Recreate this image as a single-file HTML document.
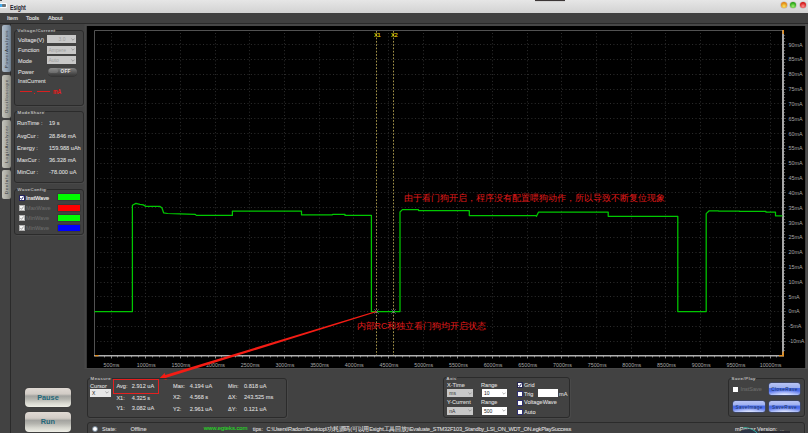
<!DOCTYPE html>
<html><head><meta charset="utf-8"><style>
*{margin:0;padding:0;box-sizing:border-box}
html,body{width:808px;height:433px;overflow:hidden;background:#424242;font-family:"Liberation Sans",sans-serif;color:#d8d8d8}
.a{position:absolute;white-space:nowrap}
.gb{position:absolute;border:1px solid #2b2b2b;border-radius:3px;box-shadow:0.8px 0.8px 0 #4c4c4c}
.gl{position:absolute;font-size:4.3px;letter-spacing:0.55px;color:#e0e0e0;background:#424242;padding:0 0.5px;line-height:5px}
.t{position:absolute;white-space:nowrap;font-size:5.6px;line-height:8px;color:#d8d8d8;-webkit-text-stroke:0.12px currentColor}
.dd{position:absolute;background:#c8c8c8;font-size:5px;color:#a0a0a0;line-height:8px}
.ck{position:absolute;width:6px;height:6px;background:#fff;border:0.8px solid #282860}
.btnb{position:absolute;border-radius:2.5px;background:radial-gradient(ellipse 60% 45% at 50% 100%,rgba(230,236,255,0.95),rgba(200,212,255,0) 100%),linear-gradient(#b8c4f4 0%,#9eb0f0 38%,#4a6ce4 44%,#4c6cea 62%,#7088f0 85%,#98b0f8 100%);font-size:4.6px;letter-spacing:0.45px;color:#1a3468;text-align:center;line-height:13px;box-shadow:0 0 0 0.5px #3a4a80}
.vt{font-size:4.4px;letter-spacing:0.75px;color:#30343a;transform:translate(-50%,-50%) rotate(-90deg);line-height:6px}
.chev{position:absolute;width:2.2px;height:2.2px;border-right:0.55px solid #8c8c8c;border-bottom:0.55px solid #8c8c8c;transform:rotate(45deg)}
.chk{font-size:5px;line-height:5px;font-weight:bold}
.btn{position:absolute;width:46.5px;border-radius:4px;background:linear-gradient(#e0dad4,#d2ccc6 30%,#c6c2bc 34%,#a4a4a0 42%,#b4b4ae 58%,#d8d8d0 80%,#eeeee6);font-size:7.3px;font-weight:bold;color:#24687a;text-align:center;line-height:20px;box-shadow:0 0 1px #2a2a2a}
</style></head><body>
<!-- title bar -->
<div class="a" style="left:0;top:0;width:808px;height:12.6px;background:linear-gradient(#e6e6e6,#d2d2d2)"></div>
<div class="a" style="left:0.3px;top:2.8px;width:6.5px;height:5.6px;border-radius:1.6px;background:#fafcff;box-shadow:0 0 0.8px #fff"></div>
<div class="a" style="left:0px;top:3.8px;width:6px;height:3.6px;border-radius:0 2px 2px 0;background:linear-gradient(90deg,#38a8f0,#5ab8f0 50%,#90c8e8)"></div>
<div class="a" style="left:2.2px;top:4.2px;width:3.4px;height:2.6px;border-radius:1px;background:#707478"></div>
<div class="a" style="left:0;top:0;width:2px;height:1px;background:#505050"></div>
<div class="a" style="left:10px;top:2.7px;font-size:7.2px;font-weight:bold;color:#1a1a2a;line-height:9px;transform:scaleX(0.72);transform-origin:0 0">Esight</div>
<div class="a" style="left:780.5px;top:2.3px;width:6px;height:6px;border-radius:50%;background:radial-gradient(circle at 50% 70%,#f8e860,#e08010 70%);box-shadow:0 0 0 0.6px rgba(120,90,90,0.35)"></div>
<div class="a" style="left:790px;top:2.3px;width:6px;height:6px;border-radius:50%;background:radial-gradient(circle at 50% 70%,#a0f070,#20a010 70%);box-shadow:0 0 0 0.6px rgba(120,90,90,0.35)"></div>
<div class="a" style="left:800px;top:2.3px;width:6px;height:6px;border-radius:50%;background:radial-gradient(circle at 50% 70%,#ff9090,#d01010 70%);box-shadow:0 0 0 0.6px rgba(120,90,90,0.35)"></div>
<div class="a" style="left:535.2px;top:0;width:29.7px;height:1px;background:#3c3636;box-shadow:0 0.5px 1px rgba(0,0,0,0.15)"></div>
<!-- menu -->
<div class="a" style="left:0;top:12.6px;width:808px;height:10.4px;background:#404040"></div>
<div class="a" style="left:0;top:23px;width:808px;height:1px;background:#2a2a2a"></div>
<div class="t" style="left:7px;top:14px;color:#e2e2e2">Item</div>
<div class="t" style="left:26px;top:14px;color:#e2e2e2">Tools</div>
<div class="t" style="left:48px;top:14px;color:#e2e2e2">About</div>

<!-- left tab strip -->
<div class="a" style="left:10px;top:24px;width:1px;height:409px;background:#2a2a2a"></div>
<div class="a" style="left:2px;top:25px;width:9px;height:47px;border-radius:2px;background:linear-gradient(90deg,#b0bcc8,#9aaaba 45%,#7a8a9a 85%,#687888)"></div>
<div class="a" style="left:2px;top:74.5px;width:9px;height:43px;border-radius:2px;background:linear-gradient(90deg,#c4c4bc,#b0b0a8 45%,#94948c 85%,#80807a)"></div>
<div class="a" style="left:2px;top:120px;width:9px;height:47.5px;border-radius:2px;background:linear-gradient(90deg,#c4c4bc,#b0b0a8 45%,#94948c 85%,#80807a)"></div>
<div class="a" style="left:2px;top:169.5px;width:9px;height:29px;border-radius:2px;background:linear-gradient(90deg,#c4c4bc,#b0b0a8 45%,#94948c 85%,#80807a)"></div>
<div class="a vt" style="left:6.5px;top:48.5px;">PowerAnalysis</div>
<div class="a vt" style="left:6.5px;top:96px;">Oscilloscope</div>
<div class="a vt" style="left:6.5px;top:144px;">LogicAnalyzer</div>
<div class="a vt" style="left:6.5px;top:184px;">DevInfo</div>

<!-- Voltage/Current -->
<div class="gb" style="left:14.3px;top:30.1px;width:69.5px;height:75.8px"></div>
<div class="gl" style="left:17px;top:28px">Voltage/Current</div>
<div class="t" style="left:18px;top:36px">Voltage(V)</div>
<div class="t" style="left:18px;top:46px">Function</div>
<div class="t" style="left:18px;top:56.5px">Mode</div>
<div class="t" style="left:18px;top:68px">Power</div>
<div class="t" style="left:18px;top:77px">InstCurrent</div>
<div class="dd" style="left:47px;top:35.2px;width:29px;height:8.2px;padding-left:11.5px">3.0</div>
<div class="dd" style="left:47px;top:45.9px;width:29px;height:8px;padding-left:1.5px">Ampere</div>
<div class="dd" style="left:47px;top:56px;width:29px;height:8px;padding-left:1.5px">Auto</div>
<svg class="a" style="left:70.6px;top:37.7px" width="4" height="3" viewBox="0 0 4 3"><path d="M0.4 0.6L2 2.2L3.6 0.6" stroke="#7a7a7a" stroke-width="0.6" fill="none"/></svg>
<svg class="a" style="left:70.6px;top:48.2px" width="4" height="3" viewBox="0 0 4 3"><path d="M0.4 0.6L2 2.2L3.6 0.6" stroke="#7a7a7a" stroke-width="0.6" fill="none"/></svg>
<svg class="a" style="left:70.6px;top:58.5px" width="4" height="3" viewBox="0 0 4 3"><path d="M0.4 0.6L2 2.2L3.6 0.6" stroke="#7a7a7a" stroke-width="0.6" fill="none"/></svg>
<div class="a" style="left:47.7px;top:68.2px;width:29.1px;height:7.8px;border-radius:4px;background:linear-gradient(#808080,#5e5e5e 45%,#444 80%,#3a3a3a);box-shadow:0 0.5px 0.5px #2a2a2a"></div>
<div class="a" style="left:48.5px;top:68.2px;width:9px;height:5px;border-radius:4px 4px 2px 2px;background:linear-gradient(#8a8a8a,#6a6a6a)"></div>
<div class="a" style="left:60.6px;top:68.2px;font-size:4.7px;font-weight:bold;color:#e4e4e4;line-height:8px;letter-spacing:0.25px">OFF</div>
<div class="a" style="left:20px;top:91px;width:12px;height:0.8px;background:#d82020"></div>
<div class="a" style="left:33.6px;top:93px;width:1px;height:1px;background:#d82020"></div>
<div class="a" style="left:37px;top:91px;width:12.5px;height:0.8px;background:#d82020"></div>
<div class="a" style="left:53.2px;top:87.6px;font-size:7.6px;font-weight:bold;color:#f01818;line-height:8px;transform:scaleX(0.66);transform-origin:0 0">mA</div>

<!-- ModeShare -->
<div class="gb" style="left:14.3px;top:111.2px;width:69.5px;height:72.2px"></div>
<div class="gl" style="left:17px;top:109.5px">ModeShare</div>
<div class="t" style="left:17px;top:119.3px">RunTime :</div>
<div class="t" style="left:17px;top:131.8px">AvgCur :</div>
<div class="t" style="left:17px;top:144.2px">Energy :</div>
<div class="t" style="left:17px;top:156.3px">MaxCur :</div>
<div class="t" style="left:17px;top:168.1px">MinCur :</div>
<div class="t" style="left:49px;top:119.3px">19 s</div>
<div class="t" style="left:49px;top:131.8px">28.846 mA</div>
<div class="t" style="left:49px;top:144.2px">159.988 uAh</div>
<div class="t" style="left:49px;top:156.3px">36.328 mA</div>
<div class="t" style="left:49px;top:168.1px">-78.000 uA</div>

<!-- WaveConfig -->
<div class="gb" style="left:14.3px;top:188.9px;width:69.5px;height:46.1px"></div>
<div class="gl" style="left:17px;top:187px">WaveConfig</div>
<div class="ck" style="left:18.6px;top:195.1px;border-color:#262660"></div>
<div class="ck" style="left:18.6px;top:205.1px;border-color:#b0b0b0;background:#f4f4f4"></div>
<div class="ck" style="left:18.6px;top:215.1px;border-color:#b0b0b0;background:#f4f4f4"></div>
<div class="ck" style="left:18.6px;top:225.2px;border-color:#b0b0b0;background:#f4f4f4"></div>
<svg class="a" style="left:18.6px;top:195.1px" width="6" height="6" viewBox="0 0 6 6"><path d="M1.4 3.1L2.6 4.4L4.6 1.5" stroke="#2a2a70" stroke-width="1" fill="none"/></svg>
<svg class="a" style="left:18.6px;top:205.1px" width="6" height="6" viewBox="0 0 6 6"><path d="M1.4 3.1L2.6 4.4L4.6 1.5" stroke="#9a9a9a" stroke-width="0.9" fill="none"/></svg>
<svg class="a" style="left:18.6px;top:215.1px" width="6" height="6" viewBox="0 0 6 6"><path d="M1.4 3.1L2.6 4.4L4.6 1.5" stroke="#9a9a9a" stroke-width="0.9" fill="none"/></svg>
<svg class="a" style="left:18.6px;top:225.2px" width="6" height="6" viewBox="0 0 6 6"><path d="M1.4 3.1L2.6 4.4L4.6 1.5" stroke="#9a9a9a" stroke-width="0.9" fill="none"/></svg>
<div class="t" style="left:26px;top:193.9px;color:#f4f4f4">InstWave</div>
<div class="t" style="left:26px;top:203.9px;color:#686868">MaxWave</div>
<div class="t" style="left:26px;top:213.9px;color:#686868">MinWave</div>
<div class="t" style="left:26px;top:224px;color:#686868">MinWave</div>
<div class="a" style="left:57.6px;top:194.4px;width:22.8px;height:6px;background:#00ff00;box-shadow:0 0 0 0.5px #303030"></div>
<div class="a" style="left:57.6px;top:204.6px;width:22.8px;height:6px;background:#ff0000;box-shadow:0 0 0 0.5px #303030"></div>
<div class="a" style="left:57.6px;top:214.8px;width:22.8px;height:6px;background:#00ff00;box-shadow:0 0 0 0.5px #303030"></div>
<div class="a" style="left:57.6px;top:224.9px;width:22.8px;height:6px;background:#0000ff;box-shadow:0 0 0 0.5px #303030"></div>

<!-- buttons -->
<div class="btn" style="left:24.7px;top:387.5px;height:19.8px">Pause</div>
<div class="btn" style="left:24.7px;top:412.2px;height:19.6px">Run</div>
<svg width="808" height="433" viewBox="0 0 808 433" style="position:absolute;left:0;top:0">
<rect x="84.5" y="24" width="723.5" height="345" fill="#484848"/>
<rect x="805" y="24" width="2" height="345" fill="#505050"/>
<rect x="86.8" y="26" width="718.4" height="342" fill="#000"/>
<path d="M97.0 44.5H782M97.0 59.5H782M97.0 74.5H782M97.0 89.5H782M97.0 103.5H782M97.0 118.5H782M97.0 133.5H782M97.0 148.5H782M97.0 163.5H782M97.0 178.5H782M97.0 192.5H782M97.0 207.5H782M97.0 222.5H782M97.0 237.5H782M97.0 252.5H782M97.0 267.5H782M97.0 282.5H782M97.0 296.5H782M97.0 311.5H782M97.0 326.5H782M97.0 341.5H782" stroke="#2e2e2e" stroke-width="1" stroke-dasharray="1 2.42" fill="none"/>
<path d="M111.5 33.0V354.5M145.5 33.0V354.5M180.5 33.0V354.5M215.5 33.0V354.5M249.5 33.0V354.5M284.5 33.0V354.5M319.5 33.0V354.5M353.5 33.0V354.5M388.5 33.0V354.5M423.5 33.0V354.5M457.5 33.0V354.5M492.5 33.0V354.5M527.5 33.0V354.5M561.5 33.0V354.5M596.5 33.0V354.5M631.5 33.0V354.5M665.5 33.0V354.5M700.5 33.0V354.5M735.5 33.0V354.5M770.5 33.0V354.5" stroke="#2e2e2e" stroke-width="1" stroke-dasharray="1 2.42" fill="none"/>
<path d="M94.5 30.5H783M94.5 30.5V355.5" stroke="#525252" stroke-width="1" fill="none"/>
<rect x="782" y="30" width="2" height="326" fill="#a8a8a8"/>
<path d="M784 35.5h1.1M784 38.5h1.1M784 41.5h1.1M784 44.5h1.8M784 47.5h1.1M784 50.5h1.1M784 53.5h1.1M784 56.5h1.1M784 59.5h1.8M784 62.5h1.1M784 65.5h1.1M784 68.5h1.1M784 71.5h1.1M784 74.5h1.8M784 77.5h1.1M784 80.5h1.1M784 83.5h1.1M784 86.5h1.1M784 89.5h1.8M784 92.5h1.1M784 94.5h1.1M784 97.5h1.1M784 100.5h1.1M784 103.5h1.8M784 106.5h1.1M784 109.5h1.1M784 112.5h1.1M784 115.5h1.1M784 118.5h1.8M784 121.5h1.1M784 124.5h1.1M784 127.5h1.1M784 130.5h1.1M784 133.5h1.8M784 136.5h1.1M784 139.5h1.1M784 142.5h1.1M784 145.5h1.1M784 148.5h1.8M784 151.5h1.1M784 154.5h1.1M784 157.5h1.1M784 160.5h1.1M784 163.5h1.8M784 166.5h1.1M784 169.5h1.1M784 172.5h1.1M784 175.5h1.1M784 178.5h1.8M784 181.5h1.1M784 184.5h1.1M784 187.5h1.1M784 190.5h1.1M784 192.5h1.8M784 195.5h1.1M784 198.5h1.1M784 201.5h1.1M784 204.5h1.1M784 207.5h1.8M784 210.5h1.1M784 213.5h1.1M784 216.5h1.1M784 219.5h1.1M784 222.5h1.8M784 225.5h1.1M784 228.5h1.1M784 231.5h1.1M784 234.5h1.1M784 237.5h1.8M784 240.5h1.1M784 243.5h1.1M784 246.5h1.1M784 249.5h1.1M784 252.5h1.8M784 255.5h1.1M784 258.5h1.1M784 261.5h1.1M784 264.5h1.1M784 267.5h1.8M784 270.5h1.1M784 273.5h1.1M784 276.5h1.1M784 279.5h1.1M784 282.5h1.8M784 285.5h1.1M784 288.5h1.1M784 291.5h1.1M784 293.5h1.1M784 296.5h1.8M784 299.5h1.1M784 302.5h1.1M784 305.5h1.1M784 308.5h1.1M784 311.5h1.8M784 314.5h1.1M784 317.5h1.1M784 320.5h1.1M784 323.5h1.1M784 326.5h1.8M784 329.5h1.1M784 332.5h1.1M784 335.5h1.1M784 338.5h1.1M784 341.5h1.8M784 344.5h1.1M784 347.5h1.1M784 350.5h1.1" stroke="#6c6c6c" stroke-width="0.8" fill="none"/>
<rect x="94" y="355" width="690" height="1.5" fill="#b0b0b0"/>
<path d="M104.5 356v1.4M111.5 356v2.4M117.5 356v1.4M124.5 356v1.4M131.5 356v1.4M138.5 356v1.4M145.5 356v2.4M152.5 356v1.4M159.5 356v1.4M166.5 356v1.4M173.5 356v1.4M180.5 356v2.4M187.5 356v1.4M194.5 356v1.4M201.5 356v1.4M208.5 356v1.4M215.5 356v2.4M221.5 356v1.4M228.5 356v1.4M235.5 356v1.4M242.5 356v1.4M249.5 356v2.4M256.5 356v1.4M263.5 356v1.4M270.5 356v1.4M277.5 356v1.4M284.5 356v2.4M291.5 356v1.4M298.5 356v1.4M305.5 356v1.4M312.5 356v1.4M319.5 356v2.4M326.5 356v1.4M332.5 356v1.4M339.5 356v1.4M346.5 356v1.4M353.5 356v2.4M360.5 356v1.4M367.5 356v1.4M374.5 356v1.4M381.5 356v1.4M388.5 356v2.4M395.5 356v1.4M402.5 356v1.4M409.5 356v1.4M416.5 356v1.4M423.5 356v2.4M430.5 356v1.4M437.5 356v1.4M443.5 356v1.4M450.5 356v1.4M457.5 356v2.4M464.5 356v1.4M471.5 356v1.4M478.5 356v1.4M485.5 356v1.4M492.5 356v2.4M499.5 356v1.4M506.5 356v1.4M513.5 356v1.4M520.5 356v1.4M527.5 356v2.4M534.5 356v1.4M541.5 356v1.4M548.5 356v1.4M554.5 356v1.4M561.5 356v2.4M568.5 356v1.4M575.5 356v1.4M582.5 356v1.4M589.5 356v1.4M596.5 356v2.4M603.5 356v1.4M610.5 356v1.4M617.5 356v1.4M624.5 356v1.4M631.5 356v2.4M638.5 356v1.4M645.5 356v1.4M652.5 356v1.4M659.5 356v1.4M665.5 356v2.4M672.5 356v1.4M679.5 356v1.4M686.5 356v1.4M693.5 356v1.4M700.5 356v2.4M707.5 356v1.4M714.5 356v1.4M721.5 356v1.4M728.5 356v1.4M735.5 356v2.4M742.5 356v1.4M749.5 356v1.4M756.5 356v1.4M763.5 356v1.4M770.5 356v2.4M776.5 356v1.4" stroke="#9a9a9a" stroke-width="0.9" fill="none"/>
<rect x="782.5" y="30" width="1.5" height="4" fill="#e08a1a"/>
<rect x="782.5" y="351.5" width="1.5" height="4.5" fill="#e08a1a"/>
<rect x="779" y="355" width="5" height="1.3" fill="#e08a1a"/>
<rect x="95" y="355" width="3.5" height="1.3" fill="#e08a1a"/>
<g font-family="Liberation Sans, sans-serif" font-size="5.4" fill="#a8a8a8"><text x="788.5" y="46.5">90mA</text><text x="788.5" y="61.3">85mA</text><text x="788.5" y="76.2">80mA</text><text x="788.5" y="91.0">75mA</text><text x="788.5" y="105.8">70mA</text><text x="788.5" y="120.7">65mA</text><text x="788.5" y="135.5">60mA</text><text x="788.5" y="150.3">55mA</text><text x="788.5" y="165.1">50mA</text><text x="788.5" y="180.0">45mA</text><text x="788.5" y="194.8">40mA</text><text x="788.5" y="209.6">35mA</text><text x="788.5" y="224.5">30mA</text><text x="788.5" y="239.3">25mA</text><text x="788.5" y="254.1">20mA</text><text x="788.5" y="268.9">15mA</text><text x="788.5" y="283.8">10mA</text><text x="788.5" y="298.6">5mA</text><text x="788.5" y="313.4">0mA</text><text x="788.5" y="328.3">-5mA</text><text x="788.5" y="343.1">-10mA</text></g>
<g font-family="Liberation Sans, sans-serif" font-size="5.3" fill="#a8a8a8" text-anchor="middle"><text x="111.5" y="367.4">500ms</text><text x="146.2" y="367.4">1000ms</text><text x="180.9" y="367.4">1500ms</text><text x="215.6" y="367.4">2000ms</text><text x="250.3" y="367.4">2500ms</text><text x="284.9" y="367.4">3000ms</text><text x="319.6" y="367.4">3500ms</text><text x="354.3" y="367.4">4000ms</text><text x="389.0" y="367.4">4500ms</text><text x="423.7" y="367.4">5000ms</text><text x="458.4" y="367.4">5500ms</text><text x="493.1" y="367.4">6000ms</text><text x="527.8" y="367.4">6500ms</text><text x="562.5" y="367.4">7000ms</text><text x="597.2" y="367.4">7500ms</text><text x="631.8" y="367.4">8000ms</text><text x="666.5" y="367.4">8500ms</text><text x="701.2" y="367.4">9000ms</text><text x="735.9" y="367.4">9500ms</text><text x="770.6" y="367.4">10000ms</text></g>
<path d="M94.5 311.5 L132.4 311.5 L132.4 205.2 L135.9 203.4 L139.9 204.4 L143.3 204.9 L145.8 206.4 L160.1 206.4 L162 208 L163.6 212.8 L167.6 213.5 L180 213.8 L195.3 214.4 L196.3 215.4 L232.4 215.4 L232.4 211.2 L301.5 211.2 L301.5 214.8 L332 214.8 L333 214.4 L345 214.4 L345 215.4 L371.4 215.4 L371.4 311.5 L400 311.5 L400 212 L402.4 209.6 L418.5 209.6 L418.5 210.5 L469.3 210.5 L469.3 215.6 L535.7 215.6 L536.5 216.3 L538.6 212 L608.2 212 L608.2 216.3 L677.8 216.3 L677.8 311.5 L706.2 311.5 L706.2 213.6 L709.2 210.8 L718.5 210.8 L718.5 211.1 L739.5 211.1 L739.5 211.4 L765.9 211.4 L765.9 212.1 L775.5 212.1 L775.5 215.8 L782.5 215.8" stroke="#00c800" stroke-width="1.25" fill="none" stroke-linejoin="round"/>
<path d="M376.5 31V355M393.5 31V355" stroke="#a09048" stroke-width="1" stroke-dasharray="1.7 1.6" fill="none"/>
<g font-family="Liberation Sans, sans-serif" font-size="5.6" fill="#e4d400" stroke="#e4d400" stroke-width="0.15"><text x="373.9" y="36.6">X1</text><text x="390.9" y="36.6">X2</text></g>
<path d="M374.3 309.3l4.4 4.4M378.7 309.3l-4.4 4.4M391.3 309.3l4.4 4.4M395.7 309.3l-4.4 4.4" stroke="#7080a0" stroke-width="0.7"/>
<text x="404" y="201.3" font-family="Liberation Sans, sans-serif" font-size="8.8" fill="#e01a1a">由于看门狗开启，程序没有配置喂狗动作，所以导致不断复位现象</text>
<text x="356.6" y="329.4" font-family="Liberation Sans, sans-serif" font-size="8.8" fill="#e01a1a">内部RC和独立看门狗均开启状态</text>
<path d="M376.32 310.93 L165.27 374.95 L164.68 373.04 L159.50 378.30 L166.74 379.73 L166.15 377.82 L376.68 312.07Z" fill="#f41c14"/>
</svg>

<!-- Measure -->
<div class="gb" style="left:86.8px;top:377.9px;width:200.0px;height:39.9px"></div>
<div class="gl" style="left:90px;top:376px">Measure</div>
<div class="t" style="left:90px;top:381.5px">Cursor</div>
<div class="dd" style="left:90px;top:389px;width:20.6px;height:8.2px;background:#e8e8e8;color:#222;padding-left:2px">X</div>
<svg class="a" style="left:104.6px;top:391.2px" width="4" height="3" viewBox="0 0 4 3"><path d="M0.4 0.6L2 2.2L3.6 0.6" stroke="#7a7a7a" stroke-width="0.6" fill="none"/></svg>
<div class="a" style="left:113px;top:378.8px;width:46px;height:15px;border:1.6px solid #e42020"></div>
<div class="t" style="left:116.4px;top:381.7px">Avg:</div>
<div class="t" style="left:131.8px;top:381.7px">2.912 uA</div>
<div class="t" style="left:116.4px;top:393.7px">X1:</div>
<div class="t" style="left:131.8px;top:393.7px">4.325 s</div>
<div class="t" style="left:116.4px;top:403.7px">Y1:</div>
<div class="t" style="left:131.8px;top:403.7px">3.082 uA</div>
<div class="t" style="left:173px;top:382px">Max:</div>
<div class="t" style="left:189.8px;top:382px">4.194 uA</div>
<div class="t" style="left:173px;top:393.4px">X2:</div>
<div class="t" style="left:189.8px;top:393.4px">4.568 s</div>
<div class="t" style="left:173px;top:404.5px">Y2:</div>
<div class="t" style="left:189.8px;top:404.5px">2.961 uA</div>
<div class="t" style="left:228px;top:382px">Min:</div>
<div class="t" style="left:244px;top:382px">0.818 uA</div>
<div class="t" style="left:228px;top:393.4px">&Delta;X:</div>
<div class="t" style="left:244px;top:393.4px">243.525 ms</div>
<div class="t" style="left:228px;top:404.5px">&Delta;Y:</div>
<div class="t" style="left:244px;top:404.5px">0.121 uA</div>

<!-- Axis -->
<div class="gb" style="left:443.0px;top:377.4px;width:127.1px;height:40.3px"></div>
<div class="gl" style="left:446px;top:375.5px">Axis</div>
<div class="t" style="left:447px;top:381px">X-Time</div>
<div class="t" style="left:481px;top:381px">Range</div>
<div class="t" style="left:447px;top:398px">Y-Current</div>
<div class="t" style="left:481px;top:398px">Range</div>
<div class="dd" style="left:447.3px;top:389.4px;width:25.7px;height:8px;color:#333;padding-left:2px">ms</div>
<div class="dd" style="left:482px;top:389.4px;width:25.2px;height:8px;background:#fff;color:#222;padding-left:2px">10</div>
<div class="dd" style="left:447.3px;top:407px;width:25.7px;height:8px;color:#333;padding-left:2px">nA</div>
<div class="dd" style="left:482px;top:407px;width:25.2px;height:8px;background:#fff;color:#222;padding-left:2px">500</div>
<svg class="a" style="left:467.5px;top:391.5px" width="4" height="3" viewBox="0 0 4 3"><path d="M0.4 0.6L2 2.2L3.6 0.6" stroke="#7a7a7a" stroke-width="0.6" fill="none"/></svg>
<svg class="a" style="left:502.1px;top:391.5px" width="4" height="3" viewBox="0 0 4 3"><path d="M0.4 0.6L2 2.2L3.6 0.6" stroke="#7a7a7a" stroke-width="0.6" fill="none"/></svg>
<svg class="a" style="left:467.5px;top:409.1px" width="4" height="3" viewBox="0 0 4 3"><path d="M0.4 0.6L2 2.2L3.6 0.6" stroke="#7a7a7a" stroke-width="0.6" fill="none"/></svg>
<svg class="a" style="left:502.1px;top:409.1px" width="4" height="3" viewBox="0 0 4 3"><path d="M0.4 0.6L2 2.2L3.6 0.6" stroke="#7a7a7a" stroke-width="0.6" fill="none"/></svg>
<div class="ck" style="left:516.8px;top:382.2px;border-color:#262650"></div>
<svg class="a" style="left:516.8px;top:382.2px" width="6" height="6" viewBox="0 0 6 6"><path d="M1.4 3.1L2.6 4.4L4.6 1.5" stroke="#2a2a70" stroke-width="1" fill="none"/></svg>
<div class="ck" style="left:516.8px;top:391.2px;border-color:#303070"></div>
<div class="ck" style="left:516.8px;top:400px;border-color:#303070"></div>
<div class="ck" style="left:516.8px;top:408.6px;border-color:#303070"></div>
<div class="t" style="left:524px;top:381px">Grid</div>
<div class="t" style="left:524px;top:389.7px">Trig</div>
<div class="t" style="left:524px;top:398.4px">VoltageWave</div>
<div class="t" style="left:524px;top:407.6px">Auto</div>
<div class="a" style="left:538.2px;top:389.1px;width:19.8px;height:7.8px;background:#fff"></div>
<div class="t" style="left:559px;top:389.7px">mA</div>

<!-- Save/Play -->
<div class="gb" style="left:728.2px;top:378.1px;width:77.1px;height:39.2px"></div>
<div class="gl" style="left:731px;top:376.2px">Save/Play</div>
<div class="a" style="left:732.8px;top:386.7px;width:5.4px;height:5.4px;background:#fff"></div>
<div class="t" style="left:740.4px;top:385.4px;color:#6a6a6a;font-size:5.5px">InstSave</div>
<div class="btnb" style="left:769px;top:383.4px;width:31px;height:11.3px">CloseRave</div>
<div class="btnb" style="left:733.4px;top:400.5px;width:31.3px;height:11.7px">SaveImage</div>
<div class="btnb" style="left:769px;top:400.5px;width:31px;height:11.7px">SaveRave</div>

<!-- status bar -->
<div class="gb" style="left:86.8px;top:421.7px;width:718.0px;height:18.8px"></div>
<div class="a" style="left:91.6px;top:425.9px;width:6px;height:6px;border-radius:50%;background:radial-gradient(#fff 40%,#dde8f4);border:0.7px solid #8090a0"></div>
<div class="t" style="left:102px;top:424.9px">State:</div>
<div class="t" style="left:130.5px;top:424.9px">Offline</div>
<div class="t" style="left:203.8px;top:423.8px;color:#28d428;font-size:6px;letter-spacing:-0.1px">www.egteks.com</div>
<div class="t" style="left:252.7px;top:424.9px">tips:</div>
<div class="t" style="left:266.6px;top:424.9px;letter-spacing:-0.2px">C:\Users\Radom\Desktop\功耗源码(可以用Esight工具回放)\Evaluate_STM32F103_Standby_LSI_ON_WDT_ON.egkPlaySuccess</div>
<div class="t" style="left:735px;top:424.5px">mPower Version:</div>
<div class="a" style="left:738px;top:428.5px;width:22px;height:14px;border-radius:50%;background:#2c3444"></div>
<div class="a" style="left:760px;top:431px;width:30px;height:4px;background:#2a2a30"></div>
<div class="a" style="left:738px;top:428px;width:22px;height:14px;border-radius:50%;border-top:1px solid #30b8a8;border-right:1px solid transparent;border-left:1px solid transparent;border-bottom:0;transform:rotate(25deg)"></div>
<div class="t" style="left:780px;top:424.5px;color:#999;font-size:5px">...</div>
</body></html>
